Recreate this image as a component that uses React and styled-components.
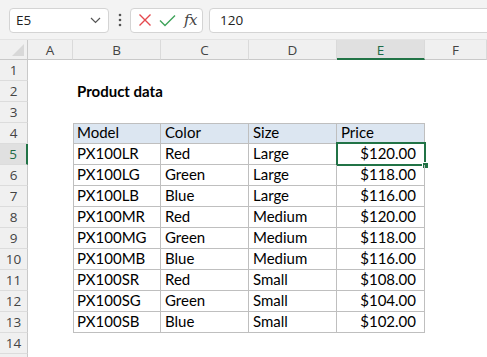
import React from "react";
import styled, { createGlobalStyle, css } from "styled-components";

const Global = createGlobalStyle`
  html, body { margin: 0; padding: 0; background: #fff; overflow: hidden; }
  body { width: 487px; height: 357px; }
`;

const Page = styled.div`
  width: 487px;
  height: 357px;
  overflow: hidden;
  background: #fff;
  font-family: "Open Sans", "Noto Sans", sans-serif;
`;

const Toolbar = styled.div`
  height: 39px;
  background: #f3f3f3;
  border-bottom: 1px solid #e3e3e3;
  display: flex;
  align-items: center;
  padding-left: 9px;
  overflow: hidden;
`;

const Box = styled.div`
  height: 23px;
  margin-top: 1px;
  background: #fff;
  border: 1px solid #d4d4d4;
  border-radius: 4px;
  display: flex;
  align-items: center;
  box-sizing: content-box;
`;

const NameBox = styled(Box)`
  width: 98px;
  justify-content: space-between;
  font-size: 13.5px;
  color: #222;
  span { padding-left: 6px; }
  svg { margin-right: 7px; }
`;

const Dots = styled.div`
  width: 21px;
  display: flex;
  justify-content: center;
`;

const FuncBox = styled(Box)`
  justify-content: space-between;
  padding: 0 0 0 7px;
  box-sizing: border-box;
  height: 25px;
  width: 73px;
`;

const Fx = styled.span`
  font-family: "DejaVu Serif", "Liberation Serif", serif;
  font-style: italic;
  font-size: 15px;
  color: #444;
  margin-right: 5px;
  letter-spacing: -0.5px;
`;

const FormulaInput = styled(Box)`
  flex: 1;
  margin-left: 6px;
  margin-right: -10px;
  padding-left: 10px;
  font-size: 13.5px;
  color: #222;
`;

const Sheet = styled.div`
  display: grid;
  grid-template-columns: 28px 45px 88px 88px 88px 88px 62px;
  grid-template-rows: 20px;
  grid-auto-rows: 21px;
  font-family: "Lato", "Liberation Sans", sans-serif;
`;

const Corner = styled.div`
  background: #f0f0f0;
  border-right: 1px solid #c9c9c9;
  border-bottom: 1px solid #c9c9c9;
  box-sizing: border-box;
  position: relative;
  &::after {
    content: "";
    position: absolute;
    right: 3px;
    bottom: 3px;
    width: 0;
    height: 0;
    border-left: 12px solid transparent;
    border-bottom: 12px solid #d8d8d8;
  }
`;

const ColHead = styled.div`
  box-sizing: border-box;
  background: ${(p) => (p.$sel ? "#e0e0e0" : "#f0f0f0")};
  border-right: 1px solid #dadada;
  border-bottom: ${(p) => (p.$sel ? "2px solid #217346" : "1px solid #c9c9c9")};
  display: flex;
  align-items: center;
  justify-content: center;
  padding-top: ${(p) => (p.$sel ? "1px" : "0")};
  font-family: "Open Sans", "Noto Sans", sans-serif;
  font-size: 13.5px;
  color: ${(p) => (p.$sel ? "#1d6b47" : "#444")};
`;

const RowHead = styled.div`
  box-sizing: border-box;
  background: ${(p) => (p.$sel ? "#e0e0e0" : "#f0f0f0")};
  border-right: ${(p) => (p.$sel ? "2px solid #217346" : "1px solid #c9c9c9")};
  border-bottom: 1px solid #dcdcdc;
  display: flex;
  align-items: center;
  justify-content: center;
  font-family: "Open Sans", "Noto Sans", sans-serif;
  font-size: 13.5px;
  color: ${(p) => (p.$sel ? "#1d6b47" : "#444")};
`;

const Cell = styled.div`
  box-sizing: border-box;
  position: relative;
  display: flex;
  align-items: flex-end;
  padding: 0 4px 2px 4px;
  font-size: 15px;
  line-height: 18px;
  color: #000;
  white-space: nowrap;
  ${(p) => p.$bold && css`font-weight: 700;`}
  ${(p) => p.$right && css`justify-content: flex-end; padding-right: 8px;`}
  ${(p) =>
    p.$table &&
    css`
      border-right: 1px solid #bfbfbf;
      border-bottom: 1px solid #bfbfbf;
    `}
  ${(p) => p.$top && css`border-top: 1px solid #bfbfbf;`}
  ${(p) => p.$left && css`border-left: 1px solid #bfbfbf; padding-left: 3px;`}
  ${(p) => p.$head && css`background: #dce6f1;`}
`;

const Selection = styled.div`
  position: absolute;
  left: -1px;
  top: -2px;
  right: -2px;
  bottom: -2px;
  border: 2px solid #217346;
  pointer-events: none;
  &::after {
    content: "";
    position: absolute;
    right: -5px;
    bottom: -5px;
    width: 5px;
    height: 5px;
    background: #217346;
    border: 1px solid #fff;
  }
`;

const cols = ["A", "B", "C", "D", "E", "F"];

const data = [
  ["PX100LR", "Red", "Large", "$120.00"],
  ["PX100LG", "Green", "Large", "$118.00"],
  ["PX100LB", "Blue", "Large", "$116.00"],
  ["PX100MR", "Red", "Medium", "$120.00"],
  ["PX100MG", "Green", "Medium", "$118.00"],
  ["PX100MB", "Blue", "Medium", "$116.00"],
  ["PX100SR", "Red", "Small", "$108.00"],
  ["PX100SG", "Green", "Small", "$104.00"],
  ["PX100SB", "Blue", "Small", "$102.00"],
];

function buildRows() {
  const rows = [];
  for (let r = 1; r <= 15; r++) {
    rows.push(
      <RowHead key={`h${r}`} $sel={r === 5}>
        {r <= 14 ? r : null}
      </RowHead>
    );
    for (let c = 0; c < 6; c++) {
      let content = null;
      const props = {};
      if (r === 2 && c === 1) {
        content = "Product data";
        props.$bold = true;
      }
      if (r >= 4 && r <= 13 && c >= 1 && c <= 4) {
        props.$table = true;
        if (r === 4) {
          props.$top = true;
          props.$head = true;
          content = ["Model", "Color", "Size", "Price"][c - 1];
        } else {
          content = data[r - 5][c - 1];
          if (c === 4) props.$right = true;
        }
        if (c === 1) props.$left = true;
      }
      rows.push(
        <Cell key={`${r}-${c}`} {...props}>
          {content}
          {r === 5 && c === 4 && <Selection />}
        </Cell>
      );
    }
  }
  return rows;
}

export default function App() {
  return (
    <Page>
      <Global />
      <Toolbar>
        <NameBox>
          <span>E5</span>
          <svg width="11" height="7" viewBox="0 0 11 7">
            <path d="M1 1 L5.5 5.5 L10 1" fill="none" stroke="#555" strokeWidth="1.2" />
          </svg>
        </NameBox>
        <Dots>
          <svg width="4" height="14" viewBox="0 0 4 14">
            <circle cx="2" cy="2" r="1.3" fill="#555" />
            <circle cx="2" cy="7" r="1.3" fill="#555" />
            <circle cx="2" cy="12" r="1.3" fill="#555" />
          </svg>
        </Dots>
        <FuncBox>
          <svg width="14" height="14" viewBox="0 0 14 14">
            <path d="M1.5 1.5 L12.5 12.5 M12.5 1.5 L1.5 12.5" stroke="#e5484d" strokeWidth="1.4" fill="none" />
          </svg>
          <svg width="17" height="13" viewBox="0 0 17 13">
            <path d="M1 6.5 L6 11.5 L16 1.5" stroke="#3fa35b" strokeWidth="1.4" fill="none" />
          </svg>
          <Fx>fx</Fx>
        </FuncBox>
        <FormulaInput>120</FormulaInput>
      </Toolbar>
      <Sheet>
        <Corner />
        {cols.map((c) => (
          <ColHead key={c} $sel={c === "E"}>
            {c}
          </ColHead>
        ))}
        {buildRows()}
      </Sheet>
    </Page>
  );
}
